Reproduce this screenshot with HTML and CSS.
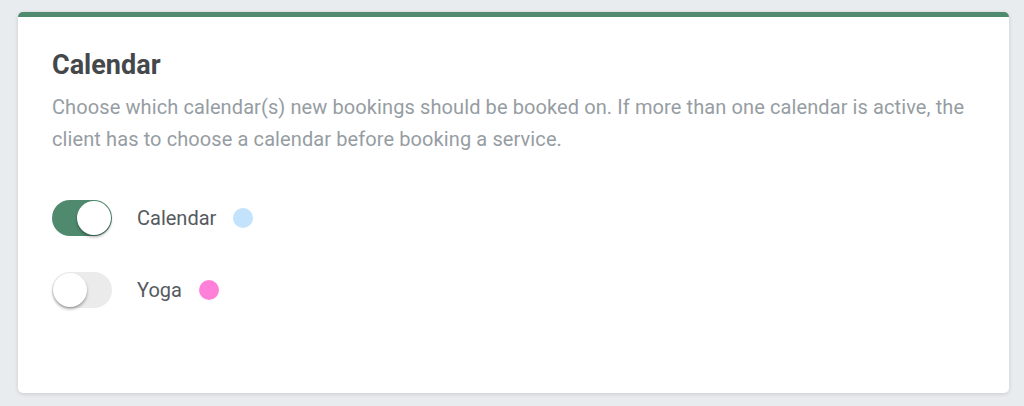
FILE: index.html
```html
<!DOCTYPE html>
<html lang="en">

<head>
    <meta charset="UTF-8">
    <meta name="viewport" content="width=device-width, initial-scale=1.0">
    <title>Calendar</title>
    <link rel="stylesheet" href="styles.css">
</head>

<body>

    <div class="card">
        <h2 class="card-title">Calendar</h2>
        <p class="card-text">Choose which calendar(s) new bookings should be booked on. If more than one calendar is active, the client has to choose a calendar before booking a service.</p>

        <div class="calendar-list">
            <div class="calendar-row">
                <label class="switch">
                    <input type="checkbox" checked>
                    <span class="slider"></span>
                </label>
                <span class="calendar-name">Calendar</span>
                <span class="dot dot-blue"></span>
            </div>
            <div class="calendar-row">
                <label class="switch">
                    <input type="checkbox">
                    <span class="slider"></span>
                </label>
                <span class="calendar-name">Yoga</span>
                <span class="dot dot-pink"></span>
            </div>
        </div>
    </div>

</body>

</html>
```

FILE: styles.css
```css
body {
    margin: 0;
    padding: 12px 15px 13px 18px;
    background: #e9ecef;
    font-family: Roboto, "Liberation Sans", sans-serif;
}

.card {
    background: #fff;
    border-top: 5px solid #4f8a6f;
    border-radius: 5px;
    box-shadow: 0 1px 4px rgba(0, 0, 0, 0.14);
    height: 381px;
    box-sizing: border-box;
    padding: 30px 34px;
}

.card-title {
    margin: 0;
    font-size: 27px;
    font-weight: 700;
    color: #45484b;
    line-height: 36px;
}

.card-text {
    margin: 8px 0 0;
    font-size: 20px;
    line-height: 32px;
    letter-spacing: 0.1px;
    color: #969da3;
}

.calendar-list {
    margin-top: 45px;
    display: flex;
    flex-direction: column;
    gap: 36px;
}

.calendar-row {
    display: flex;
    align-items: center;
    height: 36px;
}

.switch {
    position: relative;
    width: 60px;
    height: 36px;
    margin-right: 25px;
}

.switch input {
    display: none;
}

.slider {
    position: absolute;
    inset: 0;
    border-radius: 18px;
    background: #ebebeb;
    cursor: pointer;
}

.slider::before {
    content: "";
    position: absolute;
    left: 1px;
    top: 1px;
    width: 34px;
    height: 34px;
    border-radius: 50%;
    background: #fff;
    box-shadow: 0 2px 3px rgba(0, 0, 0, 0.35);
}

.switch input:checked + .slider {
    background: #4f8a6f;
}

.switch input:checked + .slider::before {
    left: 25px;
}

.calendar-name {
    font-size: 20px;
    color: #555a5e;
}

.dot {
    width: 20px;
    height: 20px;
    border-radius: 50%;
    margin-left: 17px;
}

.dot-blue {
    background: #c3e2fb;
}

.dot-pink {
    background: #ff80d8;
}
```
